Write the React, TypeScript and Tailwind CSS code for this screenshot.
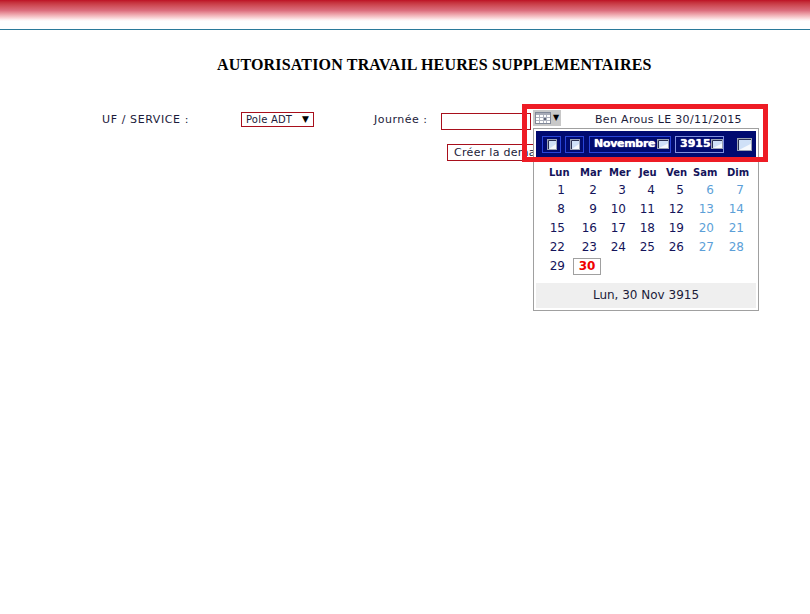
const rows: (number | null)[][] = [
  [1, 2, 3, 4, 5, 6, 7],
  [8, 9, 10, 11, 12, 13, 14],
  [15, 16, 17, 18, 19, 20, 21],
  [22, 23, 24, 25, 26, 27, 28],
  [29, 30, null, null, null, null, null],
];
const days = ['Lun', 'Mar', 'Mer', 'Jeu', 'Ven', 'Sam', 'Dim'];

// little bevelled thumbnail used by the calendar header buttons
function MiniIcon({ w = 10, h = 11 }: { w?: number; h?: number }) {
  return (
    <svg width={w} height={h} viewBox={`0 0 ${w} ${h}`} className="shrink-0">
      <rect x="0.5" y="0.5" width={w - 1} height={h - 1} fill="#c9cfdc" stroke="#9aa2b4" />
      <path d={`M1.5 ${h - 1} V1.5 H${w - 1}`} stroke="#2a3050" fill="none" />
      <rect x="2" y="2" width={w - 3} height={h - 3} fill="#cfe0f7" />
      <path d={`M2 ${h - 1} L${w - 1} ${h * 0.45} V${h - 1} Z`} fill="#f6f9fd" />
    </svg>
  );
}

function CalendarIcon() {
  return (
    <svg width="16" height="12" viewBox="0 0 16 12" className="shrink-0">
      <rect x="0.5" y="0.5" width="15" height="11" fill="#ffffff" stroke="#808898" />
      <rect x="1" y="1" width="14" height="2" fill="#a8acb8" />
      <path d="M1 5.5H15M1 8.5H15M4.5 3V11M8.5 3V11M11.5 3V11" stroke="#b0b4c0" fill="none" />
      <rect x="9" y="6" width="2" height="2" fill="#606878" />
    </svg>
  );
}

export default function App() {
  return (
    <div className="relative min-h-[614px] bg-white font-['DejaVu_Sans',sans-serif] text-[11px] text-[#1b1b3a]">
      <div className="h-[21px] bg-gradient-to-b from-[#bd0f25] via-[#dc6e7e] to-white" />
      <div className="mt-[8px] h-px bg-[#2a7a9a]" />

      <h1 className="mt-[26px] pl-[217px] font-['Liberation_Serif',serif] text-[16px] leading-[18px] font-bold tracking-[0.17px] text-black">
        AUTORISATION TRAVAIL HEURES SUPPLEMENTAIRES
      </h1>

      <div className="mt-[36px] flex items-start pl-[102px]">
        <span className="w-[139px] leading-[20px] tracking-[0.6px]">UF / SERVICE :</span>
        <div className="mt-[2px] flex h-[15px] w-[73px] items-center justify-between border border-[#a80f1c] px-[4px] text-[10px] tracking-[0.2px]">
          <span>Pole ADT</span>
          <span className="text-[9px] text-black">▼</span>
        </div>
        <span className="ml-[60px] w-[67px] leading-[20px] tracking-[0.5px]">Journée :</span>
        <div className="mt-[3px] h-[17px] w-[90px] border border-[#a80f1c]" />
        <div className="ml-[2px] flex h-[16px] w-[28px] items-center bg-[#c8c8c8] pl-[2px]">
          <CalendarIcon />
          <span className="flex-1 text-center text-[8px] leading-[14px] text-black">▼</span>
        </div>
        <span className="ml-[34px] leading-[20px] tracking-[0.32px]">Ben Arous LE 30/11/2015</span>
      </div>

      <div className="mt-[14px] pl-[447px]">
        <button className="h-[17px] w-[120px] overflow-hidden border border-[#a80f1c] pl-[6px] text-left text-[11px] leading-[14px] tracking-[0.3px] whitespace-nowrap">
          Créer la demande
        </button>
      </div>

      <div className="absolute top-[128px] left-[533px] z-10 w-[226px] border border-[#a0a0a0] bg-white pt-[2px]">
        <div className="mx-[2px] flex h-[26px] items-center bg-[#000a70] pl-[6px] text-white">
          <span className="flex h-[17px] w-[19px] items-center justify-center border border-[#2a45d8]"><MiniIcon /></span>
          <span className="ml-[4px] flex h-[17px] w-[19px] items-center justify-center border border-[#2a45d8]"><MiniIcon /></span>
          <span className="ml-[5px] flex h-[17px] w-[82px] items-center justify-between border border-[#2a45d8] pr-[1px] pl-[4px] text-[11px] font-bold tracking-[-0.3px] [text-shadow:0_0_1px_#fff]"><span>Novembre</span><MiniIcon w={12} h={10} /></span>
          <span className="ml-[4px] flex h-[17px] w-[49px] items-center justify-between border border-[#8090e0] pr-[1px] pl-[4px] text-[11px] font-bold [text-shadow:0_0_1px_#fff]"><span>3915</span><MiniIcon w={12} h={10} /></span>
          <span className="ml-[13px] flex"><MiniIcon w={15} h={13} /></span>
        </div>

        <div className="mx-[2px] mt-[9px]">
          <div className="grid grid-cols-[31px_29px_30px_27px_27px_34px_auto] pl-[13px] text-[10px] leading-[14px] font-bold text-[#14145a]">
            {days.map((d) => <span key={d}>{d}</span>)}
          </div>
          <div className="mt-[1px] pl-[9px]">
            {rows.map((row, i) => (
              <div key={i} className="grid h-[19px] grid-cols-[20px_32px_29px_29px_29px_30px_30px] text-right text-[12px] leading-[19px]">
                {row.map((n, j) =>
                  n === 30 ? (
                    <span key={j} className="mt-[1px] -mr-[4px] ml-[8px] h-[17px] border border-[#a0a0a0] text-center text-[12px] leading-[15px] font-bold text-[#f00000]">30</span>
                  ) : (
                    <span key={j} className={j > 4 ? 'text-[#5c9fd8]' : 'text-[#14145a]'}>{n}</span>
                  ),
                )}
              </div>
            ))}
          </div>
        </div>

        <div className="mx-[2px] mt-[7px] mb-[2px] h-[25px] bg-[#efefef] text-center text-[12px] leading-[25px]">Lun, 30 Nov 3915</div>
      </div>

      <div className="absolute top-[104px] left-[522px] z-20 h-[58px] w-[246px] border-[5px] border-[#ee1c25]" />
    </div>
  );
}
